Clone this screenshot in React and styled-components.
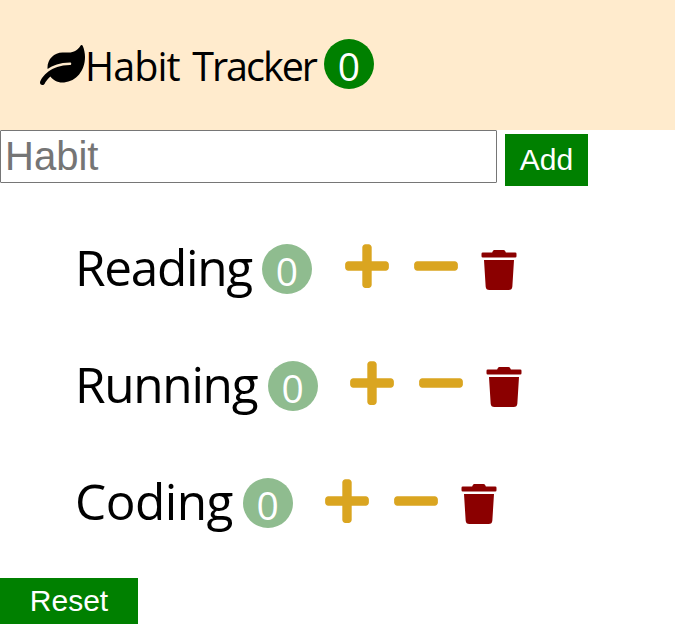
import React from "react";
import styled, { createGlobalStyle } from "styled-components";
import { FaLeaf, FaPlus, FaMinus, FaTrash } from "react-icons/fa";

const Global = createGlobalStyle`
  * { box-sizing: border-box; }
  body { margin: 0; background: #fff; color: #000; font-family: "Open Sans", "Noto Sans", sans-serif; }
`;
const Page = styled.main`
  height: 634px;
  overflow: hidden;
`;
const Header = styled.header`
  display: flex;
  align-items: center;
  height: 130px;
  padding: 0 0 2px 40px;
  background: blanchedalmond;
`;
const Leaf = styled(FaLeaf)`
  width: 45px;
  height: 40px;
  flex: none;
  margin-top: 2px;
`;
const Title = styled.span`
  width: 239px;
  font-size: 39.5px;
  letter-spacing: -0.9px;
  word-spacing: 3px;
  line-height: 50px;
  padding-top: 4px;
  white-space: nowrap;
`;
const TightWord = styled.span`
  letter-spacing: -2px;
`;
const Badge = styled.span`
  flex: none;
  width: 50px;
  height: 50px;
  border-radius: 50%;
  background: ${(p) => p.$color};
  color: #fff;
  font-size: 39px;
  line-height: 54px;
  text-align: center;
`;
const Form = styled.form`
  display: flex;
  gap: 8px;
  height: 56px;
`;
const Field = styled.input`
  width: 497px;
  height: 53px;
  padding: 1px 4px;
  border: 1px solid #767676;
  border-radius: 1px;
  font: 40px "Liberation Sans", sans-serif;
  &::placeholder { color: #757575; }
`;
const Button = styled.button`
  width: ${(p) => p.$width}px;
  height: ${(p) => p.$height}px;
  margin-top: ${(p) => p.$top}px;
  padding: 0;
  border: 0;
  background: green;
  color: #fff;
  font: 30px "Liberation Sans", sans-serif;
`;
const List = styled.ul`
  list-style: none;
  margin: 24px 0 0;
  padding: 0 0 0 75px;
`;
const Row = styled.li`
  display: flex;
  align-items: center;
  height: 117.15px;
`;
const Name = styled.span`
  width: ${(p) => p.$width}px;
  font-size: 49.5px;
  letter-spacing: ${(p) => p.$spacing}px;
  line-height: 60px;
  padding-bottom: 4px;
  white-space: nowrap;
`;
const Action = styled.button`
  display: flex;
  padding: 0;
  border: 0;
  background: none;
  color: ${(p) => p.$color};
  margin: ${(p) => p.$margin};
`;

const habits = [
  { name: "Reading", width: 187, spacing: -1.3 },
  { name: "Running", width: 192.7, spacing: -1.3 },
  { name: "Coding", width: 167.7, spacing: -0.5 },
];

export default function App() {
  return (
    <Page>
      <Global />
      <Header>
        <Leaf />
        <Title>Habit <TightWord>Tracker</TightWord></Title>
        <Badge $color="green">0</Badge>
      </Header>
      <Form onSubmit={(e) => e.preventDefault()}>
        <Field placeholder="Habit" />
        <Button $width={83} $height={52} $top={4}>Add</Button>
      </Form>
      <List>
        {habits.map((h) => (
          <Row key={h.name}>
            <Name $width={h.width} $spacing={h.spacing}>{h.name}</Name>
            <Badge $color="darkseagreen">0</Badge>
            <Action $color="goldenrod" $margin="-4.7px 0 0 29.7px" aria-label="Increase"><FaPlus size={50} /></Action>
            <Action $color="goldenrod" $margin="-4.7px 0 0 18.9px" aria-label="Decrease"><FaMinus size={50} /></Action>
            <Action $color="darkred" $margin="3px 0 0 18.2px" aria-label="Delete"><FaTrash size={40} /></Action>
          </Row>
        ))}
      </List>
      <Button $width={138} $height={46} $top={16.55}>Reset</Button>
    </Page>
  );
}
